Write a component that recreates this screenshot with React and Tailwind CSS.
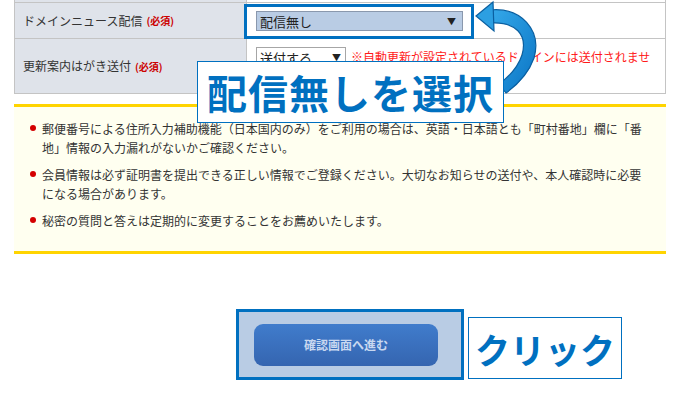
import React from 'react';

const Required = () => (
  <span className="ml-1 text-[10px] font-bold text-[#cc0000]">(必須)</span>
);

const notes = [
  '郵便番号による住所入力補助機能（日本国内のみ）をご利用の場合は、英語・日本語とも「町村番地」欄に「番地」情報の入力漏れがないかご確認ください。',
  '会員情報は必ず証明書を提出できる正しい情報でご登録ください。大切なお知らせの送付や、本人確認時に必要になる場合があります。',
  '秘密の質問と答えは定期的に変更することをお薦めいたします。',
];

const App = () => {
  return (
    <div
      className="relative w-[683px] h-[396px] overflow-hidden bg-white text-[#333]"
      style={{ fontFamily: '"Noto Sans CJK JP", "Noto Sans", sans-serif' }}
    >
      {/* Form table */}
      <div className="ml-[14px] w-[652px] border-x border-b border-[#c4c4c4]">
        <div className="flex h-[2px]">
          <div className="w-[232px] bg-[#dfe3ea] border-r border-[#c4c4c4]" />
          <div className="flex-1" />
        </div>
        <div className="flex h-[36px] border-t border-[#c4c4c4]">
          <div className="w-[232px] shrink-0 bg-[#dfe3ea] border-r border-[#c4c4c4] flex items-center pl-[8px] text-[12px]">
            ドメインニュース配信<Required />
          </div>
          <div className="flex-1 flex items-start pl-[9px] pt-[8px]">
            <div className="w-[207px] h-[20px] border border-[#8a98ad] bg-[#b9cce4] flex items-center justify-between pl-[3px] pr-[6px] text-[13px] leading-none text-[#222]">
              <span>配信無し</span>
              <span className="text-[9px]">▼</span>
            </div>
          </div>
        </div>
        <div className="flex h-[55px] border-t border-[#c4c4c4]">
          <div className="w-[232px] shrink-0 bg-[#dfe3ea] border-r border-[#c4c4c4] flex items-center pl-[8px] text-[12px]">
            更新案内はがき送付<Required />
          </div>
          <div className="flex-1 flex items-start pl-[9px] pt-[8px] gap-[5px]">
            <div className="w-[90px] h-[20px] border border-[#a6a6a6] bg-white flex items-center justify-between pl-[3px] pr-[4px] text-[13px] leading-none text-[#222]">
              <span>送付する</span>
              <span className="text-[9px]">▼</span>
            </div>
            <span className="text-[12px] leading-[20px] text-[#ff1a1a] whitespace-nowrap">
              ※自動更新が設定されているドメインには送付されませ
            </span>
          </div>
        </div>
      </div>

      {/* Notes */}
      <div className="ml-[14px] mt-[10px] w-[652px] h-[150px] border-y-[3px] border-[#ffd400] bg-[#fffff0] pt-[12px] pl-[16px]">
        <ul className="w-[625px] space-y-[8px]">
          {notes.map((n) => (
            <li key={n} className="flex gap-[6px] text-[12px] leading-[19px]">
              <span className="mt-[6px] w-[6px] h-[6px] rounded-full bg-[#d40000] shrink-0" />
              <span className="w-[604px] shrink-0">{n}</span>
            </li>
          ))}
        </ul>
      </div>

      {/* Submit */}
      <div className="flex items-start gap-[4px] pl-[236px] mt-[55px]">
        <div className="w-[228px] h-[71px] border-[3px] border-[#0070c0] bg-[#b9cce4] pl-[15px] pt-[12px]">
          <div className="w-[184px] h-[42px] rounded-[9px] bg-gradient-to-b from-[#407ccc] to-[#3565b0] flex items-center justify-center text-[12px] font-bold text-[#c8d8f0]">
            確認画面へ進む
          </div>
        </div>
        <div className="mt-[8px] w-[154px] h-[62px] border border-[#0070c0] bg-white flex items-center justify-center text-[35px] font-bold text-[#0070c0] leading-none">
          クリック
        </div>
      </div>

      {/* Annotation: highlight on select */}
      <div className="absolute left-[244px] top-[4px] w-[230px] h-[35px] border-[3px] border-[#0070c0]" />

      {/* Annotation: curved arrow */}
      <svg className="absolute left-0 top-0 pointer-events-none" width="683" height="396">
        <defs>
          <linearGradient id="arw" x1="0" y1="0" x2="1" y2="1">
            <stop offset="0" stopColor="#35a9ea" />
            <stop offset="1" stopColor="#0a74c4" />
          </linearGradient>
        </defs>
        <path
          d="M490 10 C521 7 542 30 534 58 C528 75 517 85 506 93 L499 84 C510 76 518 67 522 55 C528 34 515 22 492 23 Z"
          fill="url(#arw)"
          stroke="#0a5fa0"
          strokeWidth="1.2"
        />
        <polygon points="476,16 493,2 494,31" fill="#2c9fe2" stroke="#0a5fa0" strokeWidth="1.2" />
      </svg>

      {/* Annotation: label */}
      <div className="absolute left-[197px] top-[61px] w-[307px] h-[62px] border border-[#0070c0] bg-white flex items-center justify-center text-[40px] font-bold text-[#0070c0] leading-none tracking-[1px]">
        配信無しを選択
      </div>
    </div>
  );
};

export default App;
